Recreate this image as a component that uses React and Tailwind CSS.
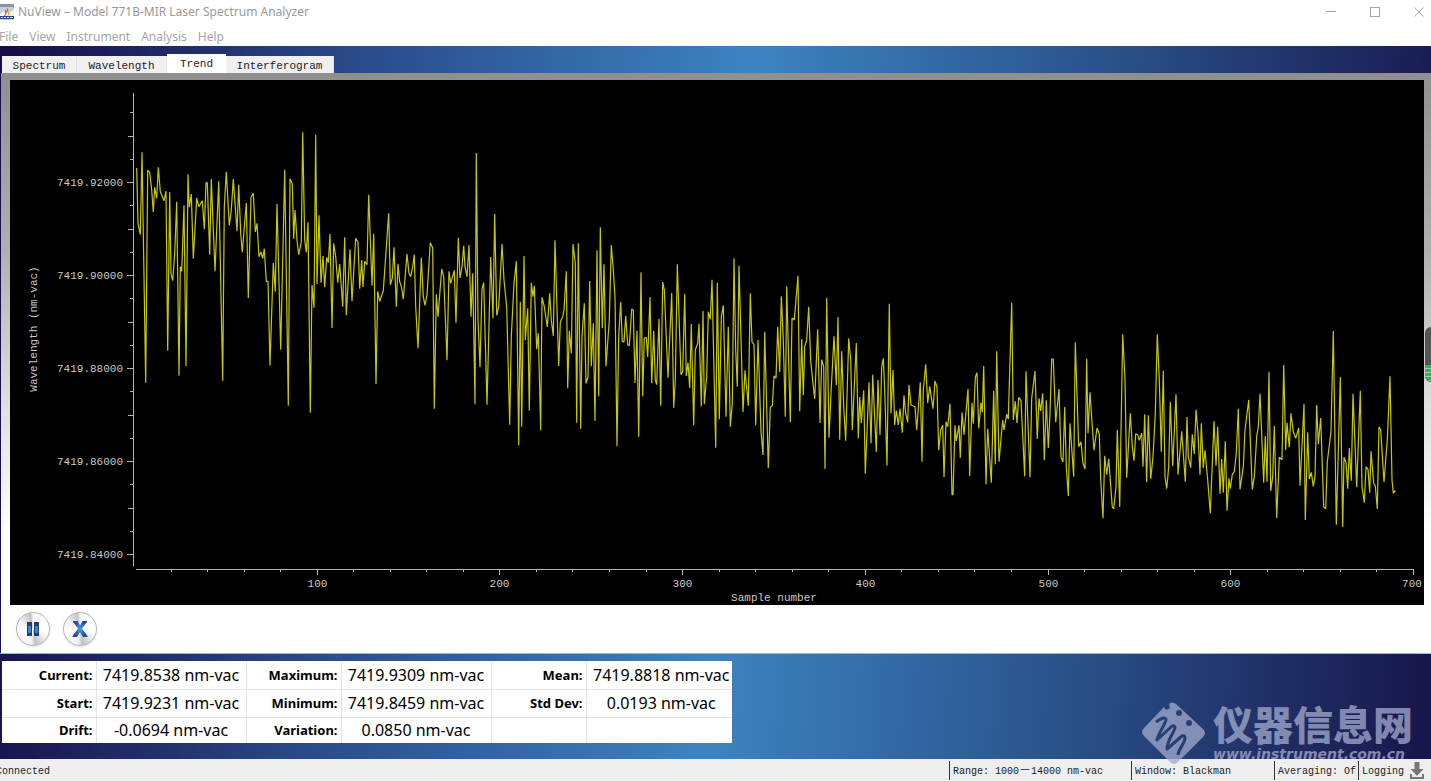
import { useState } from 'react'

const MENU_ITEMS = ['File', 'View', 'Instrument', 'Analysis', 'Help']

const TABS = [
  { id: 'spectrum', label: 'Spectrum', width: 'w-[75px]' },
  { id: 'wavelength', label: 'Wavelength', width: 'w-[90px]' },
  { id: 'trend', label: 'Trend', width: 'w-[59px]' },
  { id: 'interferogram', label: 'Interferogram', width: 'w-[108px]' }
]

const RESULT_ROWS = [
  [['Current:', '7419.8538 nm-vac'], ['Maximum:', '7419.9309 nm-vac'], ['Mean:', '7419.8818 nm-vac']],
  [['Start:', '7419.9231 nm-vac'], ['Minimum:', '7419.8459 nm-vac'], ['Std Dev:', '0.0193 nm-vac']],
  [['Drift:', '-0.0694 nm-vac'], ['Variation:', '0.0850 nm-vac'], ['', '']]
]

// Trend trace, kept in blocks. Points are x,y pairs in thirds of a plot unit,
// counted from the block origin.
const TRACE_BLOCKS = [
  {
    x: -10,
    y: 0,
    points:
      '410,264 414,430 421,464 426,217 437,908 443,270 449,278 455,330 460,397 464,322 470,355 475,262 481,335 492,362 498,333 503,812 509,336 513,580 518,602 524,520 530,365 537,887 541,560 545,574 552,376 558,858 564,283 568,382 574,342 580,536 586,430 590,354 596,380 607,362 613,448 618,308 622,308 629,524 634,297 645,574 656,304 668,902 673,380 679,275 688,436 694,390 700,297 711,454 716,314 722,460 727,517 739,369 745,654 753,352 760,340 766,456 771,430 777,530 783,516 788,535 793,506 799,604 804,604 810,857 820,548 826,635 831,372 842,809 854,269 865,977 870,296 877,312 881,476 885,390 891,480 896,524 904,486 908,157 914,480 919,517 924,427 931,998 936,615 942,683 947,164 951,612 957,406 963,608 969,528 974,622 980,532 985,548 990,462 996,744 1001,490 1007,530 1013,608 1019,552 1028,680 1034,472 1039,706 1050,508 1056,664 1067,475 1074,486 1079,626'
  },
  {
    x: 320,
    y: 40,
    points:
      '95,420 99,501 104,424 111,434 116,224 126,497 131,341 138,792 143,514 149,544 160,512 176,280 181,494 187,475 192,382 199,560 204,431 209,486 214,498 220,538 231,402 237,460 242,470 248,440 253,404 257,560 264,685 274,413 280,530 285,556 291,525 301,368 308,384 313,866 319,523 324,590 335,447 341,470 351,721 357,454 362,490 373,451 378,608 385,353 390,474 396,440 401,377 405,440 411,470 417,375 423,590 428,460 435,853 439,99 444,600 450,742 456,506 461,488 471,854 482,411 489,595 494,282 500,586 506,560 516,372 522,480 530,560 539,914 544,650 552,490 559,424 566,976 571,545 575,920 582,408 586,661 593,565 598,872 604,488 609,530 613,497 620,688 625,640 632,931 636,532 643,560 652,621 659,520 664,600 670,648 675,361 686,738 691,606 698,590 702,570 709,454 713,805 718,632 724,700 729,372 736,430 740,908 745,370 752,926 756,650 763,550 768,790 774,772 779,483 784,739 790,610 795,903 801,391 806,829 811,322 817,625 822,433 828,739 838,600 844,375 850,450 855,530 861,979 866,650 872,545 877,665 882,666 887,587 893,674 898,677 905,567 910,570 915,789 921,632 926,950 933,457 938,829 943,655 949,652 953,711 960,531 965,790 971,632 976,780 980,794 987,596 992,857 998,486 1003,510 1014,773 1025,519 1031,863 1036,780 1042,433 1053,764 1058,755 1064,521 1069,768 1074,728 1079,804'
  },
  {
    x: 670,
    y: 140,
    points:
      '34,312 41,616 46,390 53,370 57,311 64,559 69,273 73,553 80,470 85,275 91,298 96,179 107,683 112,188 118,598 124,290 130,256 138,590 145,320 151,620 157,550 162,115 167,390 172,500 177,137 189,576 195,451 205,557 211,220 216,366 222,374 227,616 234,360 243,635 249,705 254,335 265,744 271,562 277,557 282,468 288,474 293,320 299,456 304,229 310,360 316,590 320,199 331,607 336,294 343,300 354,167 359,574 365,357 370,526 374,380 380,360 386,260 392,425 404,537 413,328 420,609 425,419 431,440 435,747 440,234 447,653 453,520 462,349 469,496 474,291 479,659 485,394 491,560 497,662 502,500 506,355 512,420 517,630 529,369 535,655 539,531 544,610 551,511 556,761 567,487 573,670 578,464 589,696 594,480 600,645 605,440 610,415 614,510 621,737 628,251 633,580 639,450 644,615 649,572 655,615 660,566 667,638 672,526 677,580 683,607 687,494 693,555 705,560 710,630 721,487 726,725 730,510 737,433 743,549 749,499 759,566 765,483 771,502 776,691 782,630 788,616 792,772 798,605 803,620 810,551 816,824 819,824 825,616 829,663 837,616 841,713 846,577 852,644 864,507 869,768 876,548 880,611 886,472 891,458 896,625 903,548 907,577 911,438 918,793 923,626 934,788 941,512 946,733 950,394 957,725 968,600 972,630 980,583 985,597 995,248 1000,600 1006,544 1011,609 1016,532 1023,542 1034,769 1038,454 1050,772 1055,535 1065,453 1072,657 1077,535'
  },
  {
    x: 1020,
    y: 200,
    points:
      '32,393 38,340 43,541 49,361 55,504 60,400 65,236 70,238 77,427 87,327 93,532 99,546 104,381 109,560 115,648 120,430 131,590 136,187 146,500 153,485 159,550 165,567 170,236 174,460 180,337 187,440 192,511 201,444 208,462 212,600 219,715 224,527 230,584 236,536 247,681 251,687 258,620 262,449 269,681 278,163 285,300 290,593 301,400 307,500 312,542 317,461 323,464 328,481 335,460 339,560 344,403 350,607 355,406 362,597 369,530 376,400 382,163 388,300 394,515 400,272 405,590 410,626 416,560 421,366 428,558 438,343 444,584 455,454 466,605 471,411 475,530 482,563 487,463 493,522 498,389 504,460 510,584 514,430 520,563 525,511 533,600 541,700 552,423 558,557 563,440 570,641 575,537 580,638 586,484 591,692 597,595 601,626 607,583 613,575 619,520 625,386 630,628 640,560 645,450 656,359 667,628 673,590 680,470 685,440 690,341 701,608 706,468 711,605 717,275 722,633 728,590 733,438 740,714 748,532 756,539 761,255 767,511 771,428 778,502 783,400 790,455 797,475 806,444 810,617 822,371 826,720 833,457 838,597 844,577 850,619 855,590 860,375 865,493 872,414 881,681 887,686 892,545 903,455 910,153 919,734 931,291 938,741 942,532 948,548 953,626 958,504 964,602 969,341 980,622 991,332 996,620 1003,668 1008,560 1014,568 1019,638 1023,514 1031,610 1036,618 1042,687 1047,440 1052,450 1062,606 1067,540 1072,480 1080,289 1086,600 1090,640 1096,631'
  }
]

const tracePoints = TRACE_BLOCKS.flatMap(block =>
  block.points.split(' ').map(pair => {
    const [x, y] = pair.split(',').map(Number)
    return `${(block.x + x / 3).toFixed(1)},${(block.y + y / 3).toFixed(1)}`
  })
).join(' ')

const Y_LABELS = ['7419.92000', '7419.90000', '7419.88000', '7419.86000', '7419.84000']
const Y_FIRST = 102
const Y_STEP = 93

// 20 minor ticks, every fourth one carries a label
const yTicks = Array.from({ length: 20 }, (_, i) => ({
  y: Math.round(Y_FIRST + ((i - 3) * Y_STEP) / 4) + 0.5,
  size: (i - 3) % 4 === 0 ? 6 : (i - 3) % 2 === 0 ? 5 : 3
}))

const xTicks = Array.from({ length: 35 }, (_, i) => {
  const sample = (i + 1) * 20
  return { sample, x: Math.round(124 + sample * 1.827) + 0.5, major: sample % 100 === 0 }
})

const TitleBar = () => (
  <div className="flex h-6 items-center justify-between pr-[7px]">
    <div className="flex items-center gap-1 whitespace-nowrap text-[12px] leading-6 text-[#999]">
      <svg className="h-4 w-3.5" viewBox="0 0 14 16" aria-hidden="true">
        <rect width="14" height="16" fill="#c9ced6" />
        <rect width="14" height="3" fill="#8b93a3" />
        <path d="M0 10l4-3 4 2 6-3v6H0z" fill="#f0f2f4" />
        <path d="M7 3l1 3-3 6h-1l3-5z" fill="#d23c2a" />
        <path d="M8 5l2 5-2 2z" fill="#e8b52c" />
        <path d="M5 6l2 1-2 3z" fill="#3c9a55" />
        <rect y="12" width="14" height="3" fill="#2d4a83" />
        <path d="M1 13.5h2M4 13.5h2M7 13.5h2M10 13.5h3" stroke="#dce4f2" />
      </svg>
      <h1>NuView – Model 771B-MIR Laser Spectrum Analyzer</h1>
    </div>
    <div className="flex gap-[34px] text-[#a5a5a5]">
      <button type="button" aria-label="Minimize">
        <svg className="h-2.5 w-2.5" viewBox="0 0 10 10"><path d="M0 4.5h10" stroke="currentColor" /></svg>
      </button>
      <button type="button" aria-label="Maximize">
        <svg className="h-2.5 w-2.5" viewBox="0 0 10 10"><rect x="0.5" y="0.5" width="9" height="9" fill="none" stroke="currentColor" /></svg>
      </button>
      <button type="button" aria-label="Close">
        <svg className="h-2.5 w-2.5" viewBox="0 0 10 10"><path d="M0.5 0.5l9 9M9.5 0.5l-9 9" stroke="currentColor" /></svg>
      </button>
    </div>
  </div>
)

const MenuBar = () => (
  <nav className="-ml-px flex h-[22px] gap-[11px] pt-px text-[12px] leading-6 text-[#a5a5a5]">
    {MENU_ITEMS.map(item => (
      <button key={item} type="button">{item}</button>
    ))}
  </nav>
)

const TabBar = ({ activeTab, onTabChange }) => (
  <div role="tablist" className="flex h-[27px] items-end pl-0.5 font-['Liberation_Mono',monospace] text-[11px] text-[#222]">
    {TABS.map(tab => (
      <button
        key={tab.id}
        type="button"
        role="tab"
        aria-selected={activeTab === tab.id}
        onClick={() => onTabChange(tab.id)}
        className={`${tab.width} pt-0.5 ${activeTab === tab.id ? 'h-[19px] bg-white' : 'h-[17px] border-r border-[#e2e2e2] bg-[#f0f0f0]'}`}
      >
        {tab.label}
      </button>
    ))}
  </div>
)

const TrendChart = () => (
  <svg
    className="block w-full bg-black font-['Liberation_Mono',monospace]"
    viewBox="0 0 1414 525"
    role="img"
    aria-label="Wavelength trend"
  >
    <g stroke="#b4b4b4" fill="none">
      <path d="M123.5 13V486M126 489.5H1404" />
      {yTicks.map(tick => (
        <path key={tick.y} d={`M${123 - tick.size} ${tick.y}h${tick.size}`} />
      ))}
      {xTicks.map(tick => (
        <path key={tick.sample} d={`M${tick.x} 490v${tick.major ? 5 : 2}`} />
      ))}
    </g>
    <g fill="#c8c8c8" fontSize="11">
      {Y_LABELS.map((label, i) => (
        <text key={label} x="113" y={106 + i * Y_STEP} textAnchor="end">{label}</text>
      ))}
      {xTicks.filter(tick => tick.major).map(tick => (
        <text key={tick.sample} x={Math.min(tick.x, 1402)} y="507" textAnchor="middle">{tick.sample}</text>
      ))}
      <text x="764" y="521" textAnchor="middle">Sample number</text>
      <text transform="translate(27 249) rotate(-90)" textAnchor="middle">Wavelength (nm-vac)</text>
    </g>
    <polyline points={tracePoints} fill="none" stroke="#c6c614" strokeWidth="1.2" strokeLinejoin="bevel" />
  </svg>
)

const RoundButton = ({ label, children }) => (
  <button
    type="button"
    aria-label={label}
    className="flex size-[34px] items-center justify-center rounded-full border border-[#b5b5b5] bg-[conic-gradient(#f4f4f4,#fff_12%,#fff_30%,#ececec_36%,#c2c2c2_47%,#f2f2f2_52%,#fff_75%,#ececec_86%,#c4c4c4_97%,#f4f4f4)] shadow-sm"
  >
    {children}
  </button>
)

const ResultsTable = () => (
  <table className="w-[730px] table-fixed border-collapse bg-white text-black">
    <colgroup>
      <col className="w-[94px]" />
      <col className="w-[150px]" />
      <col className="w-[95px]" />
      <col className="w-[150px]" />
      <col className="w-[95px]" />
      <col className="w-[146px]" />
    </colgroup>
    <tbody>
      {RESULT_ROWS.map((row, i) => (
        <tr key={i} className="h-7 border-b border-[#e3e3e8] last:h-[26px] last:border-b-0">
          {row.map(([label, value], j) => [
            <th key={`label-${j}`} scope="row" className="border-r border-[#e3e3e8] p-0 pr-[3px] text-right text-[13px] leading-5 font-bold">{label}</th>,
            <td key={`value-${j}`} className="border-r border-[#e3e3e8] p-0 text-center text-[16px] leading-6 last:border-r-0 last:pl-1">{value}</td>
          ])}
        </tr>
      ))}
    </tbody>
  </table>
)

const Watermark = () => (
  <div className="pointer-events-none absolute right-[18px] bottom-4 flex items-start gap-1.5 text-[#a4abcd] opacity-75">
    <svg className="h-[66px] w-[66px]" viewBox="0 0 66 66" aria-hidden="true">
      <path
        d="M23 7l2 3 4-2-1-4q3-3 7 0l27 25q4 4 0 8L37 62q-4 4-8 0L3 36q-4-4 0-8z"
        fill="currentColor"
      />
      <g fill="#27406f">
        <circle cx="38" cy="13" r="3" />
        <circle cx="48" cy="23" r="3" />
      </g>
      <path
        d="M15 22q8-6 10-3c1 3-8 14-9 21l15-14q3-1 3 2c-1 4-8 13-8 21l15-13q3-1 3 2c0 5-6 10-7 17"
        fill="none"
        stroke="#27406f"
        strokeWidth="3"
        strokeLinejoin="round"
      />
    </svg>
    <div className="whitespace-nowrap">
      <div className="font-['Noto_Sans_CJK_SC',sans-serif] text-[40px] leading-[46px] font-black">仪器信息网</div>
      <div className="font-['DejaVu_Sans',sans-serif] text-[14px] leading-4 font-bold italic">www.instrument.com.cn</div>
    </div>
  </div>
)

const StatusBar = () => (
  <footer className="flex h-[23px] items-center overflow-hidden border-b border-[#d0d0d0] bg-[#eee] font-['Liberation_Mono','Noto_Sans_CJK_SC',monospace] text-[10px] whitespace-nowrap text-[#222]">
    <div className="-ml-1 flex-1 pt-0.5">Connected</div>
    <div className="flex h-[19px] w-[182px] items-center border-l border-[#333] pt-0.5 pl-[3px]">
      Range: 1000<span className="text-[12px]">－</span>14000 nm-vac
    </div>
    <div className="flex h-[19px] w-[143px] items-center border-l border-[#333] pt-0.5 pl-[3px]">Window: Blackman</div>
    <div className="flex h-[19px] w-[84px] items-center overflow-hidden border-l border-[#333] pt-0.5 pl-[3px]">Averaging: Of</div>
    <div className="flex h-[19px] w-[73px] items-center gap-1.5 border-l border-[#333] pt-0.5 pl-[3px]">
      Logging
      <svg className="h-[18px] w-3.5 shrink-0" viewBox="0 0 14 18" fill="#777" aria-hidden="true">
        <path d="M4.500 0h5v7h4L7 14 .5 7h4z" />
        <path d="M0 12h2v3h10v-3h2v5H0z" />
      </svg>
    </div>
  </footer>
)

const App = () => {
  const [activeTab, setActiveTab] = useState('trend')

  return (
    <div className="relative flex min-h-screen flex-col overflow-hidden bg-white font-['Noto_Sans','Noto_Sans_CJK_SC',sans-serif]">
      <TitleBar />
      <MenuBar />

      <div className="flex flex-1 flex-col bg-[linear-gradient(94deg,#160c48_0%,#2a4a8a_24%,#3c84c0_51%,#2a4f88_76%,#17154a_100%)]">
        <TabBar activeTab={activeTab} onTabChange={setActiveTab} />

        {/* Chart panel */}
        <main className="relative ml-px bg-[linear-gradient(#8f8f90_0px,#b0b0b0_180px,#dcdcdc_320px,#ffffff_460px)] pt-[7px] pr-[7px] pl-[9px]">
          <TrendChart />
          <div className="flex h-12 items-center gap-[13px] pl-1.5">
            <RoundButton label="Pause">
              <svg className="h-3.5 w-3" viewBox="0 0 12 14">
                <path d="M0 0h5v14H0zM7 0h5v14H7z" fill="#1e3d78" />
                <path d="M1 4h3v7H1zM8 4h3v7H8z" fill="#3c83c4" />
              </svg>
            </RoundButton>
            <RoundButton label="Clear">
              <svg className="h-4 w-4" viewBox="0 0 16 16">
                <defs>
                  <radialGradient id="clear-fill">
                    <stop offset="0" stopColor="#42a0e0" />
                    <stop offset="1" stopColor="#2a4a92" />
                  </radialGradient>
                </defs>
                <path d="M1 0h4.500L8 4.500 10.500 0H15v1L10 7.500 15.500 15v1H11L8 11 5 16H.5v-1L6 7.500 1 1z" fill="url(#clear-fill)" />
              </svg>
            </RoundButton>
          </div>
          <div className="absolute top-[254px] right-0 h-[55px] w-1.5 overflow-hidden rounded-l-md border-b border-[#777] bg-[#555]">
            <div className="mt-[38px] h-4 bg-[repeating-linear-gradient(#3fae5c_0px,#3fae5c_3px,#8ed49e_3px,#8ed49e_4px)]" />
          </div>
        </main>

        <section className="flex-1 border-t border-[#9db4d8] pt-[7px] pb-4 pl-0.5">
          <ResultsTable />
        </section>
      </div>

      <StatusBar />
      <Watermark />
    </div>
  )
}

export default App
